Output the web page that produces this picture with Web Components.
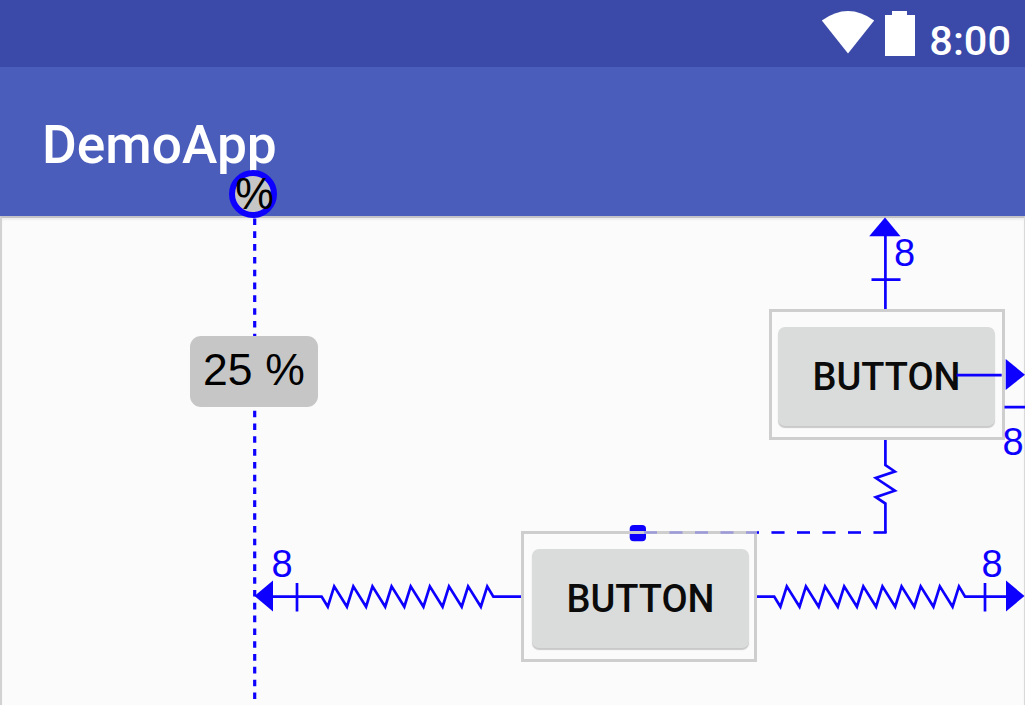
<!DOCTYPE html>
<html lang="en">
<head>
<meta charset="utf-8">
<title>DemoApp</title>
<style>
html, body { margin: 0; height: 100%; overflow: hidden; background: #fbfbfb; }
</style>
</head>
<body>
<layout-preview></layout-preview>
<script>
const define = (name, markup, setup) => customElements.define(name, class extends HTMLElement {
  constructor() {
    super();
    this.attachShadow({ mode: 'open' }).innerHTML = markup;
  }
  connectedCallback() { if (setup) setup(this, this.shadowRoot); }
});

define('status-bar', `
<style>
:host { display: flex; justify-content: flex-end; align-items: flex-start; height: 67px; box-sizing: border-box; padding-right: 14px; background: #3b4aa8; color: #fff; font: 500 41.5px/49px Roboto, sans-serif; }
svg { display: block; flex: none; }
.wifi { margin-right: 10px; }
.battery { margin-right: 14px; }
span { display: block; margin-top: 16px; }
</style>
<svg class="wifi" width="54" height="67"><path d="M.8 20.5Q27 1.5 53.2 20.5L27 53.5Z" fill="#fff"/></svg>
<svg class="battery" width="30" height="67"><path d="M0 15H7V11H22V15H30V56H0Z" fill="#fff"/></svg>
<span>8:00</span>`);

define('app-bar', `
<style>
:host { display: flex; align-items: center; height: 149px; box-sizing: border-box; padding: 7px 0 0 42px; background: #4a5dbb; color: #fff; font: 500 53.3px/60px Roboto, sans-serif; }
</style>
<span><slot></slot></span>`);

define('android-button', `
<style>
:host { --nudge: -2px; display: block; box-sizing: border-box; width: 236px; height: 131px; padding: 16px 9px 13px 10px; border: 3px solid #cecece; }
div { display: flex; align-items: center; justify-content: center; box-sizing: border-box; height: 99px; width: 217px; margin: -1px 0 0 var(--nudge); border-radius: 7px; background: #dadcdb; box-shadow: 0 2px 1px #c8c9c8; color: #0b0b0b; font: 500 38px/44px Roboto, sans-serif; }
:host(.wide-right) div { margin-left: -4px; }
</style>
<div><slot></slot></div>`);

define('percent-label', `
<style>
:host { display: flex; align-items: center; justify-content: center; box-sizing: border-box; width: 128px; height: 71px; padding-bottom: 3px; border-radius: 11px; background: #c6c6c6; color: #000; font: 44.5px/50px "Liberation Sans", sans-serif; letter-spacing: .2px; }
</style>
<slot></slot>`);

define('percent-handle', `
<style>
:host { display: block; width: 48px; height: 48px; }
div { display: flex; align-items: center; justify-content: center; box-sizing: border-box; width: 48px; height: 48px; padding-left: 3px; border: 6px solid #0d00ff; border-radius: 50%; background: #c6c6c6; color: #000; font: 43.5px/36px "Liberation Sans", sans-serif; }
</style>
<div><slot></slot></div>`);

define('constraint-lines', `
<style>
:host { display: block; width: 1025px; height: 705px; pointer-events: none; }
svg { display: block; }
</style>
<svg width="1025" height="705" fill="none" stroke="#0d00ff" stroke-width="2.7">
<path d="M254.7 218.5V700" stroke-width="3.2" stroke-dasharray="6.6 6.21"/>
<path d="M885.4 235V312M871.5 279.7H900.5"/>
<path d="M885 217.5L900.5 236.3H869.2Z" fill="#0d00ff" stroke="none"/>
<path d="M885.4 439V465L894.8 471.5L875.8 478L894.8 490.7L875.8 497.2L885.4 503.5V533"/>
<path d="M886.5 532.5H638" stroke-dasharray="13 12.5"/>
<rect x="629.7" y="525" width="16.3" height="16.2" rx="4" fill="#0d00ff" stroke="none"/>
<path class="left"/>
<path d="M297 583V611.5"/>
<path d="M254.5 596L273 580.5V611.5Z" fill="#0d00ff" stroke="none"/>
<path class="right"/>
<path d="M985 583V611.5"/>
<path d="M1024.5 596L1006 580.5V611.5Z" fill="#0d00ff" stroke="none"/>
</svg>`, (host, root) => {
  const spring = (start, coilStart, coils, end) => {
    let d = `M${start} 596.6H${coilStart}`;
    for (let i = 0; i < coils; i++) {
      const x = coilStart + i * 19.13;
      d += `L${x + 6.2} 606.7L${x + 12.6} 586.4`;
    }
    return d + `L${coilStart + (coils - 1) * 19.13 + 18.7} 596.6H${end}`;
  };
  root.querySelector('.left').setAttribute('d', spring(272, 321.6, 9, 522));
  root.querySelector('.right').setAttribute('d', spring(755, 774.2, 10, 1007));
});

define('margin-value', `
<style>
:host { display: block; color: #0d00ff; font: 38px/44px "Liberation Sans", sans-serif; }
</style>
<slot></slot>`);

define('layout-preview', `
<style>
:host { position: relative; display: flex; flex-direction: column; width: 1025px; height: 705px; overflow: hidden; background: #fbfbfb; }
.surface { flex: 1; box-sizing: border-box; border-top: 2px solid #c3c3c8; border-left: 2px solid #d2d2d2; border-right: 1px solid #d9d9d9; box-shadow: inset 0 2px 2px #eee; }
.on { position: absolute; }
</style>
<status-bar></status-bar>
<app-bar>DemoApp</app-bar>
<div class="surface"></div>
<constraint-lines class="on" style="left:0;top:0"></constraint-lines>
<android-button class="on wide-right" style="left:769px;top:309px">BUTTON</android-button>
<android-button class="on" style="left:521px;top:531px">BUTTON</android-button>
<svg class="on" style="left:630px;top:309px" width="395" height="230" fill="none" stroke="#0d00ff" stroke-width="2.7">
<path d="M326.5 66.2H371.7M374.5 98.2H395"/>
<path d="M375.7 50V81L395 65.7Z" fill="#0d00ff" stroke="none"/>
<path d="M256.5 223.5H8" stroke-dasharray="13 12.5" opacity=".25"/>
</svg>
<percent-label class="on" style="left:190px;top:336px">25 %</percent-label>
<percent-handle class="on" style="left:229px;top:170px">%</percent-handle>
<margin-value class="on" style="left:894px;top:231px">8</margin-value>
<margin-value class="on" style="left:1002.5px;top:420px">8</margin-value>
<margin-value class="on" style="left:271.5px;top:542px">8</margin-value>
<margin-value class="on" style="left:981.5px;top:542px">8</margin-value>`);
</script>
</body>
</html>
